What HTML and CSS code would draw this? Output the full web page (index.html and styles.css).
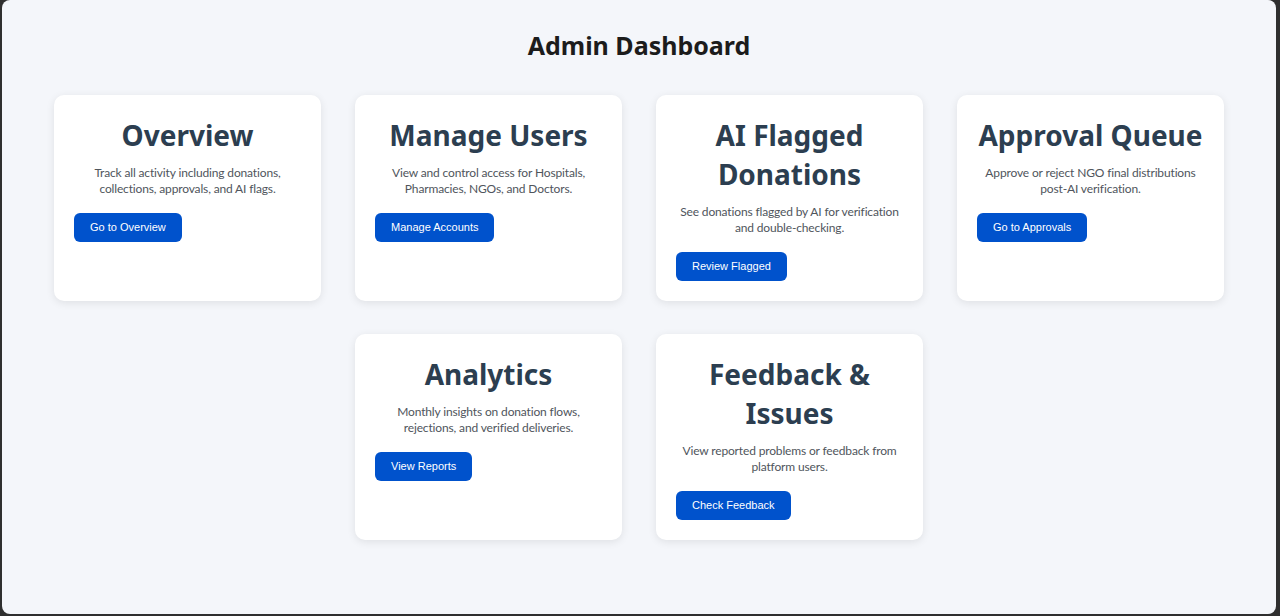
FILE: index.html
```html
<!DOCTYPE html>
<html lang="en">
<head>
<meta charset="utf-8">
<title>Admin Dashboard</title>
<link rel="stylesheet" href="styles.css">
</head>
<body>
<div class="page">
  <h1 class="page-title">Admin Dashboard</h1>
  <div class="grid">
    <div class="card">
      <h2 class="card-title">Overview</h2>
      <p class="card-text">Track all activity including donations, collections, approvals, and AI flags.</p>
      <button class="btn">Go to Overview</button>
    </div>
    <div class="card">
      <h2 class="card-title">Manage Users</h2>
      <p class="card-text">View and control access for Hospitals, Pharmacies, NGOs, and Doctors.</p>
      <button class="btn">Manage Accounts</button>
    </div>
    <div class="card">
      <h2 class="card-title">AI Flagged Donations</h2>
      <p class="card-text">See donations flagged by AI for verification and double-checking.</p>
      <button class="btn">Review Flagged</button>
    </div>
    <div class="card">
      <h2 class="card-title">Approval Queue</h2>
      <p class="card-text">Approve or reject NGO final distributions post-AI verification.</p>
      <button class="btn">Go to Approvals</button>
    </div>
    <div class="card">
      <h2 class="card-title">Analytics</h2>
      <p class="card-text">Monthly insights on donation flows, rejections, and verified deliveries.</p>
      <button class="btn">View Reports</button>
    </div>
    <div class="card">
      <h2 class="card-title">Feedback &amp; Issues</h2>
      <p class="card-text">View reported problems or feedback from platform users.</p>
      <button class="btn">Check Feedback</button>
    </div>
  </div>
</div>
</body>
</html>
```
FILE: styles.css
```css
html, body {
  margin: 0;
  padding: 0;
}
body {
  background: #2f2f2f;
  font-family: "Noto Sans", "Open Sans", sans-serif;
}
.page {
  box-sizing: border-box;
  height: 614px;
  margin: 0 4px 2px 2px;
  background: #f4f6fa;
  border-radius: 8px;
  padding-top: 27px;
}
.page-title {
  margin: 0 0 32px;
  text-align: center;
  font-size: 25px;
  line-height: 36px;
  font-weight: 700;
  color: #1c1c1c;
}
.grid {
  display: flex;
  flex-wrap: wrap;
  justify-content: center;
  column-gap: 34px;
  row-gap: 33px;
}
.card {
  box-sizing: border-box;
  width: 267px;
  background: #ffffff;
  border-radius: 10px;
  box-shadow: 0 2px 8px rgba(0, 0, 0, 0.09);
  padding: 21px 20px 20px;
  text-align: center;
}
.card-title {
  margin: 0 0 10px;
  font-size: 28px;
  line-height: 39px;
  font-weight: 700;
  color: #2c3e50;
}
.card-text {
  margin: 0 0 16px;
  font-family: Lato, "Noto Sans", sans-serif;
  font-size: 12px;
  letter-spacing: -0.15px;
  line-height: 16px;
  color: #4f555c;
}
.btn {
  display: block;
  font-family: "Liberation Sans", Arial, sans-serif;
  font-size: 11px;
  line-height: 13px;
  padding: 8px 16px;
  border: none;
  border-radius: 6px;
  background: #0052cc;
  color: #ffffff;
}
```
